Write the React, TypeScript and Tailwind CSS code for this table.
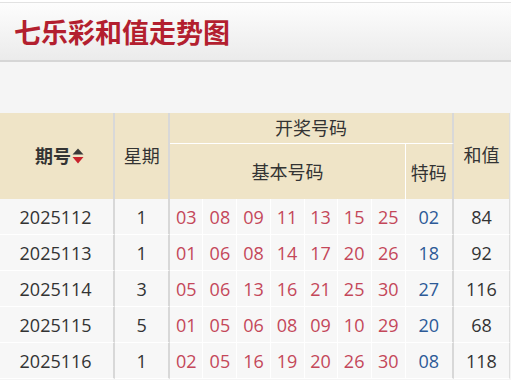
import React from "react";

const rows = [
  { q: "2025112", w: "1", n: ["03", "08", "09", "11", "13", "15", "25"], t: "02", s: "84" },
  { q: "2025113", w: "1", n: ["01", "06", "08", "14", "17", "20", "26"], t: "18", s: "92" },
  { q: "2025114", w: "3", n: ["05", "06", "13", "16", "21", "25", "30"], t: "27", s: "116" },
  { q: "2025115", w: "5", n: ["01", "05", "06", "08", "09", "10", "29"], t: "20", s: "68" },
  { q: "2025116", w: "1", n: ["02", "05", "16", "19", "20", "26", "30"], t: "08", s: "118" },
];

const numW = [33, 34, 33, 34, 33, 34, 34];

export default function App() {
  return (
    <div
      className="w-[511px] h-[380px] overflow-hidden bg-[#f5f5f5]"
      style={{ fontFamily: '"Open Sans", "Noto Sans CJK SC", sans-serif' }}
    >
      <div className="h-[2px] bg-white" />
      <div className="h-[60px] border-t border-b-2 border-t-[#e2e2e2] border-b-[#d6d6d6] bg-gradient-to-b from-[#fdfdfd] to-[#ebebeb] flex items-center pl-[14px]">
        <h1
          className="text-[27px] font-bold leading-none text-[#b31f2f]"
          style={{ fontFamily: '"Noto Sans CJK SC", sans-serif' }}
        >
          七乐彩和值走势图
        </h1>
      </div>
      <div className="h-[51px]" />
      <table className="table-fixed border-separate border-spacing-0 w-[510px] text-[#333]">
        <colgroup>
          <col className="w-[115px]" />
          <col className="w-[55px]" />
          {numW.map((w, i) => (
            <col key={i} style={{ width: w }} />
          ))}
          <col className="w-[48px]" />
          <col className="w-[56px]" />
        </colgroup>
        <thead>
          <tr className="h-[31px] bg-[#efe4c7]">
            <th
              rowSpan={2}
              className="border-r-2 border-r-[#d8d8d8] text-[18px] font-bold leading-none"
            >
              <span className="inline-flex items-center pl-[6px]">
                期号
                <svg width="12" height="16" viewBox="0 0 12 16" className="ml-[1px]">
                  <path d="M6 0.5 L11.5 6.5 L0.5 6.5 Z" fill="#3a3a3a" />
                  <path d="M0.5 9 L11.5 9 L6 15.5 Z" fill="#c8232c" />
                </svg>
              </span>
            </th>
            <th
              rowSpan={2}
              className="border-r-2 border-r-[#d8d8d8] text-[18px] font-normal leading-none"
            >
              星期
            </th>
            <th
              colSpan={8}
              className="border-r-2 border-b border-r-[#d8d8d8] border-b-white text-[18px] font-normal leading-none"
            >
              开奖号码
            </th>
            <th
              rowSpan={2}
              className="border-r border-r-[#dedede] text-[18px] font-normal leading-none pb-[3px]"
            >
              和值
            </th>
          </tr>
          <tr className="h-[55px] bg-[#efe4c7]">
            <th
              colSpan={7}
              className="border-r border-r-white text-[18px] font-normal leading-none"
            >
              基本号码
            </th>
            <th className="border-r-2 border-r-[#d8d8d8] text-[18px] font-normal leading-none pt-[2px]">
              特码
            </th>
          </tr>
        </thead>
        <tbody>
          {rows.map((r) => (
            <tr key={r.q} className="h-[36px] bg-[#f7f7f7] text-[18px] leading-none">
              <td className="text-center border-r-2 border-b border-r-[#d8d8d8] border-b-white pr-[2px]">
                {r.q}
              </td>
              <td className="text-center border-r-2 border-b border-r-[#d8d8d8] border-b-white">
                {r.w}
              </td>
              {r.n.map((x, i) => (
                <td
                  key={i}
                  className="text-center border-r border-b border-white text-[#c4475a]"
                >
                  {x}
                </td>
              ))}
              <td className="text-center border-r-2 border-b border-r-[#d8d8d8] border-b-white text-[#2d5a97]">
                {r.t}
              </td>
              <td className="text-center border-r border-b border-r-[#dedede] border-b-white">
                {r.s}
              </td>
            </tr>
          ))}
        </tbody>
      </table>
    </div>
  );
}
